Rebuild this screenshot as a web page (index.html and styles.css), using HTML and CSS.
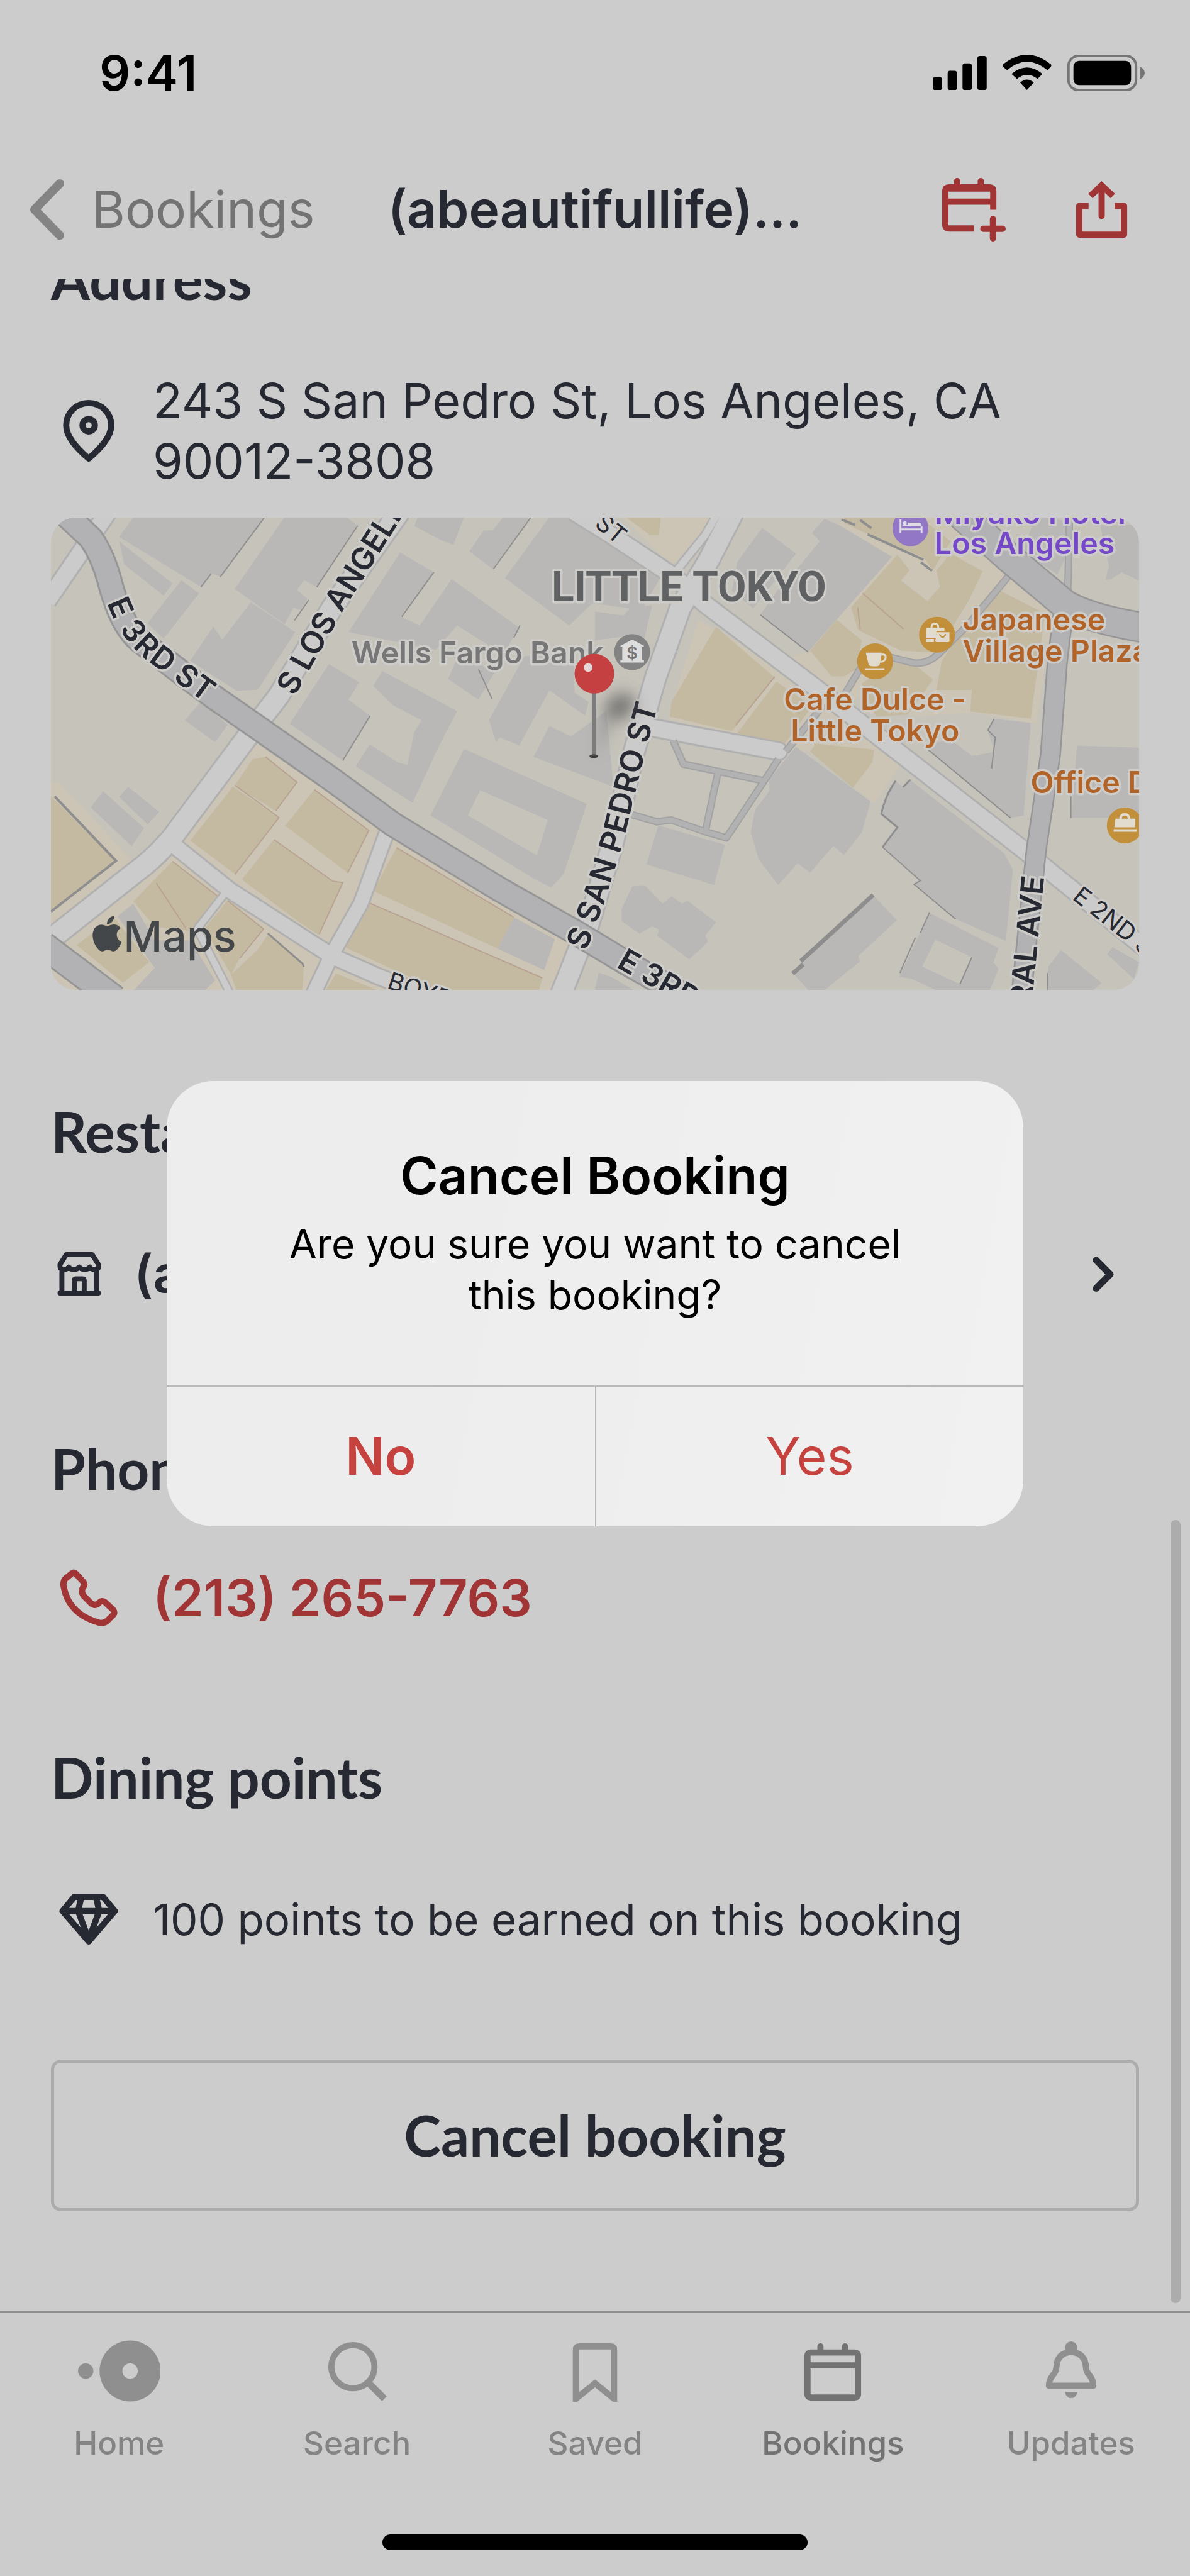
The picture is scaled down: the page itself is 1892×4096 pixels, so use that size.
FILE: index.html
```html
<!DOCTYPE html>
<html lang="en">
    <head>
        <meta charset="utf-8" />
        <meta name="viewport" content="width=device-width, initial-scale=1">
        <title>Booking details</title>
        <link rel="stylesheet" href="styles.css">
    </head>

    <body>
        <header>
            <div class="status">
                <span class="time">9:41</span>
                <svg class="signals" viewBox="1505 86 342 62" aria-hidden="true">
                    <rect x="1505" y="124" width="15" height="21" rx="4"/>
                    <rect x="1529" y="114" width="15" height="31" rx="4"/>
                    <rect x="1553" y="102" width="15" height="43" rx="4"/>
                    <rect x="1577" y="90" width="15" height="55" rx="4"/>
                    <path d="M1618 104 Q1657 72 1696 104 Q1697 106 1695 108 L1690 113 Q1657 86 1625 113 L1619 108 Q1617 106 1618 104Z"/>
                    <path d="M1632 119 Q1657 98 1682 119 L1674 127 Q1657 114 1641 127Z"/>
                    <path d="M1646 133 Q1657 123 1668 133 L1657 145Z"/>
                    <rect x="1724" y="90" width="109" height="55" rx="16" fill="none" stroke="#757575" stroke-width="4"/>
                    <rect x="1732" y="98" width="93" height="39" rx="9"/>
                    <path fill="#757575" d="M1839 107 Q1847 111 1847 117.500 Q1847 124 1839 128Z"/>
                </svg>
            </div>

            <nav class="topbar">
                <a class="back" href="#">
                    <svg viewBox="0 0 56 98" aria-hidden="true"><path d="M49 7 L8 49 L49 91"/></svg>
                    Bookings
                </a>
                <h1>(abeautifullife)...</h1>
                <div class="actions">
                    <button type="button" aria-label="Add to calendar">
                        <svg viewBox="0 0 102 102" aria-hidden="true">
                            <path d="M51 81 H11 Q5 81 5 75 V21 Q5 15 11 15 H76 Q82 15 82 21 V51 M5 38 H82"/>
                            <path d="M8 17 H79" />
                            <path stroke-linecap="round" d="M24 5 V15 M62 5 V15 M81.500 66 V97 M66 81.500 H97"/>
                        </svg>
                    </button>
                    <button type="button" aria-label="Share">
                        <svg viewBox="-10 -5 102 102" aria-hidden="true">
                            <path stroke-linejoin="round" d="M20 40 H5 V86 H77 V40 H62"/>
                            <path stroke-linecap="round" d="M41 8 V56"/>
                            <path d="M23 24 L41 7 L59 24"/>
                        </svg>
                    </button>
                </div>
            </nav>
        </header>

        <main>
            <h2 class="cut">Address</h2>
            <div class="row address">
                <svg class="icon pin" viewBox="0 0 83 101" aria-hidden="true">
                    <path d="M41.500 5 C21 5 5 21 5 41 C5 61 24 80 41.500 95 C59 80 78 61 78 41 C78 21 62 5 41.500 5Z"/>
                    <circle cx="41.500" cy="41" r="10"/>
                </svg>
                <p>243 S San Pedro St, Los Angeles, CA<br>90012-3808</p>
            </div>

            <svg class="map" viewBox="82 835 1756 762" role="img" aria-label="Map of Little Tokyo">
                <defs>
                    <filter id="soft" x="-50%" y="-50%" width="200%" height="200%"><feGaussianBlur stdDeviation="12"/></filter>
                    <path id="third" d="M188 966 Q208 1022 254 1057 Q304 1094 440 1192"/>
                    <path id="third2" d="M1002 1545 L1220 1670"/>
                    <path id="losangeles" d="M460 1116 L538 978 L666 775"/>
                    <path id="sanpedro" d="M930 1529 L960 1447 L989 1355 L1023 1215 L1065 1060"/>
                    <path id="central" d="M1640 1800 L1650 1597 L1668 1413"/>
                    <path id="second" d="M1737 1440 L1900 1568"/>
                    <path id="secondtop" d="M966 838 L1058 913"/>
                    <path id="boyd" d="M627 1582 L790 1635"/>
                </defs>

                <rect class="land" x="82" y="835" width="1756" height="762"/>

                <!-- shopping blocks -->
                <g class="zone">
                    <g transform="translate(60 1040) scale(.574 .37)">
                        <path d="M38 600 L60 600 L265 940 L390 860 L620 410 L1000 820 L1500 1260 L1460 1510 L38 1510Z"/>
                    </g>
                    <g transform="translate(960 820) scale(.574 .333)">
                        <path d="M75 40 H345 L215 280Z"/>
                        <path d="M290 540 L640 880 L840 1200 L860 1240 L785 1430 L600 1180 L500 1150 L205 1020Z"/>
                        <path d="M690 40 H1000 L1290 490 L1240 1045 L1060 990 L900 1010 L640 870 L530 740 L600 690 L835 235 L690 90Z"/>
                    </g>
                </g>

                <!-- buildings -->
                <g class="building">
                    <g transform="translate(60 520) scale(.574 .357)">
                        <path d="M270 880 H640 L515 1150 L490 1135 L460 1195 L230 970Z"/>
                        <path d="M230 990 L380 1180 L355 1235 L245 1095Z"/>
                        <path d="M405 1165 L455 1225 L355 1430 L310 1360Z"/>
                        <path d="M695 880 H870 L900 920 L785 1195 L750 1165 L730 1210 L760 1250 L740 1300 L720 1290 L695 1365 L555 1205Z"/>
                        <path d="M600 1265 L725 1400 L620 1660 L560 1665 L430 1530 L495 1375 L520 1435Z"/>
                        <path d="M1070 880 H1200 L1170 1005 L1135 985 L1060 920Z"/>
                        <path d="M1310 880 H1385 L1280 1115 L1215 1035 L1255 940 L1280 940Z"/>
                        <path d="M1440 880 H1530 L1600 960 L1760 1130 L1700 1300 L1560 1270 L1495 1370 L1315 1155Z"/>
                        <path d="M1020 1040 L1115 1130 L1020 1330 L1075 1370 L1165 1160 L1355 1380 L1310 1500 L1180 1370 L1120 1480 L875 1400Z"/>
                    </g>
                    <g transform="translate(60 1040) scale(.574 .37)">
                        <path d="M460 250 L535 350 L500 425 L415 330Z"/>
                        <path d="M820 85 L905 165 L875 240 L935 310 L858 505 L710 345Z"/>
                        <path d="M970 115 L1180 290 L1130 440 L1100 540 L1055 690 L895 530 L935 435 L1015 515 L1040 525 L1060 380 L1080 330 L1000 265 L945 180Z"/>
                        <path d="M1155 150 L1180 60 L1290 110 L1240 240Z"/>
                        <path d="M1270 330 L1370 50 L1510 40 L1510 210 L1550 250 L1540 310 L1440 200 L1355 440 L1300 405 L1290 425Z"/>
                        <path d="M1440 355 L1500 400 L1600 290 L1620 620 L1395 490Z"/>
                        <path fill-rule="evenodd" d="M1200 455 L1545 695 L1480 1000 L1445 1060 L1400 1025 L1105 745Z M1245 635 L1435 765 L1405 920 L1210 745Z"/>
                        <path d="M185 640 L300 800 L265 880 L150 710Z M255 620 L343 730 L310 785 L230 665Z"/>
                        <path d="M270 1130 L330 1290 L430 1290 L500 1465 L470 1510 H270 L330 1410 L225 1185Z"/>
                        <path d="M1340 1190 L1455 1285 L1425 1420 L1293 1325Z"/>
                    </g>
                    <g transform="translate(960 820) scale(.574 .333)">
                        <path d="M470 95 L565 220 L445 485 L385 400 L400 260Z"/>
                        <path d="M645 50 L690 85 L835 235 L600 695 L465 515 L520 380 L580 270 L632 160 L610 120Z"/>
                        <path d="M100 480 L160 470 L130 700 L90 620 L0 640 V500 L80 520Z"/>
                        <path d="M1240 40 L1325 60 L1325 230 L1300 320 L1200 210Z"/>
                        <path d="M1420 80 H1530 V350 L1480 310 L1450 345 L1435 345 L1445 280Z"/>
                        <path d="M1120 1020 L1225 1040 L1205 1490 L1170 1500 L920 1150 L1000 1120 L1060 1200 L1125 1180 L1105 1085Z"/>
                        <path d="M1355 1150 L1530 1160 V1500 H1340Z"/>
                    </g>
                    <g transform="translate(960 1200) scale(.574 .333)">
                        <path d="M565 15 L775 280 L750 430 L700 540 L670 495 L605 625 L570 580 L515 685 L460 560 L438 430 L450 320 L490 230 L490 170Z"/>
                        <path d="M885 175 L1150 530 L1175 610 L1155 955 L1015 850 L895 680 L915 660 L808 500 L850 405 L805 340 L820 240 L845 180 L865 210Z"/>
                        <path d="M178 395 L365 490 L335 685 L145 585Z"/>
                        <path d="M105 690 L140 685 L190 775 L215 740 L245 775 L260 760 L340 865 L310 930 L318 960 L300 990 L265 1045 L175 930 L180 900 L160 885 L125 920 L75 860 L75 800Z"/>
                        <path d="M780 730 L848 855 L740 1030 L745 1055 L645 1195 H600 L555 1110Z"/>
                        <path fill-rule="evenodd" d="M940 820 L1135 990 L1120 1060 L1135 1090 L1110 1195 H960 L890 1140 L855 1130Z M957 950 L1060 1035 L1025 1165 L920 1080Z"/>
                        <path d="M1310 1000 L1425 1160 L1400 1195 H1270 L1275 1080Z"/>
                        <path d="M1455 985 L1530 1060 L1515 1140 L1440 1020Z"/>
                        <path d="M10 1110 L45 1130 L110 1195 H0Z"/>
                    </g>
                </g>
                <g class="shop">
                    <g transform="translate(60 1040) scale(.574 .37)">
                        <path d="M640 490 L730 600 L670 725 L555 615 L605 500Z"/>
                        <path d="M550 620 L680 755 L555 1000 L430 855Z"/>
                        <path d="M780 630 L932 810 L872 995 L697 790Z"/>
                        <path d="M665 850 L830 1035 L860 1040 L790 1265 L740 1215 L575 1025Z"/>
                        <path d="M1010 885 L1340 1190 L1293 1325 L945 1075Z"/>
                        <path d="M930 1125 L1420 1455 L1410 1510 H1130 L865 1320Z"/>
                        <path d="M38 660 L220 945 L38 1165Z"/>
                        <path d="M380 945 L505 1095 L430 1250 L330 1230 L270 1120Z"/>
                        <path d="M535 1115 L635 1240 L570 1365 L545 1440 L470 1240Z"/>
                        <path d="M650 1260 L750 1390 L745 1510 H560 L545 1440 L620 1330Z"/>
                        <path d="M215 1190 L315 1385 L240 1475 L110 1310Z"/>
                        <path d="M840 1435 L960 1510 H810Z"/>
                    </g>
                    <g transform="translate(960 820) scale(.574 .333)">
                        <path d="M85 40 H185 L180 130 L155 130Z"/>
                        <path d="M700 40 H910 L1000 160 L950 300 L925 240 L760 120 L700 70Z"/>
                        <path d="M340 575 L505 820 L385 1080 L210 1010 L215 940Z"/>
                        <path d="M510 840 L610 960 L530 1150 L400 1090Z"/>
                        <path d="M850 225 L885 300 L860 350 L935 450 L970 380 L960 300 L1000 220 L1090 305 L1050 450 L1010 560 L960 700 L860 690 L740 590 L720 480 L755 410Z"/>
                        <path d="M1140 400 L1265 510 L1225 1020 L1055 985 L1060 880 L960 880 L975 740 L1010 650Z"/>
                        <path d="M680 540 L750 640 L735 780 L700 815 L665 815 L605 690Z"/>
                        <path d="M840 750 L900 760 L950 830 L880 1000 L790 1010 L750 850Z"/>
                        <path d="M620 1140 L785 1170 L780 1230 L725 1355 L605 1180Z"/>
                    </g>
                </g>

                <!-- building shadows -->
                <g class="edge">
                    <path d="M427 834 L355 931 M341 925 L324 947 M577 848 L511 947 M498 968 L475 1001 M857 834 L796 918 M700 923 L648 995"/>
                    <path d="M597 1155 L553 1227 M839 1009 L829 1029 M772 1080 L794 1128"/>
                    <path d="M1227 992 L1304 1052 M1492 1205 L1631 1320 M1424 1367 L1485 1421 L1475 1427 L1542 1483"/>
                    <path stroke-width="3" d="M1445 1260 Q1428 1285 1422 1313 L1448 1335 L1424 1367 M1469 1258 L1457 1270"/>
                    <path d="M1500 1472 L1485 1505 M1477 1513 L1452 1570 M1568 1545 L1549 1588"/>
                    <path d="M1728 1320 V1285 M1690 1570 V1597 M1604 1160 L1594 1178 L1606 1190 L1600 1240"/>
                    <path stroke-width="4" d="M88 1285 L187 1389 L82 1471 M1358 838 L1380 847 M1388 839 L1406 852 M1400 862 L1490 903 M1486 907 L1504 921"/>
                    <path stroke-width="7" d="M1409 1444 L1292 1551 M1296 1556 L1279 1571"/>
                    <path stroke-width="3" d="M432 1506 L488 1555 L490 1560"/>
                </g>
                <g class="edge shopedge">
                    <path d="M428 1221 L479 1262 L445 1308 M379 1267 L450 1319 L379 1411 M507 1274 L595 1340 L561 1408 M442 1355 L537 1422 L553 1424 L515 1507"/>
                    <path d="M640 1368 L829 1480 M594 1456 L875 1578 M278 1390 L350 1445 M252 1425 L300 1498 M367 1453 L425 1499 L387 1546"/>
                    <path d="M1392 957 L1458 1015 M1250 1092 L1187 1170 M1384 980 L1388 1015"/>
                </g>

                <!-- roads, outline first -->
                <g class="road outline">
                    <path stroke-width="32" d="M175 825 L76 970"/>
                    <path stroke-width="38" d="M645 825 L536 980 L450 1122 L404 1182 L278 1351 Q250 1385 215 1410 L76 1520"/>
                    <path stroke-width="30" d="M278 1362 L370 1436 L536 1543 L611 1576 L690 1606"/>
                    <path stroke-width="28" d="M627 1335 L582 1458 L536 1539 L505 1605"/>
                    <path stroke-width="15" d="M367 1436 L318 1499 L372 1605"/>
                    <path stroke-width="38" d="M1184 825 L1144 903 L1098 980 L1058 1093 L1023 1213 L989 1360 L950 1490 L921 1565 L905 1605"/>
                    <path stroke-width="16" d="M1160 825 L1138 863 L1092 920"/>
                    <path stroke-width="32" d="M925 825 L986 863 L1086 929 L1138 975 L1327 1118 L1454 1217 L1660 1378 L1700 1411 L1860 1540"/>
                    <path stroke-width="32" stroke-linecap="round" d="M1046 1173 L1256 1212"/>
                </g>
                <g class="road minor">
                    <path stroke-width="26" d="M175 825 L76 970"/>
                    <path stroke-width="32" d="M645 825 L536 980 L450 1122 L404 1182 L278 1351 Q250 1385 215 1410 L76 1520"/>
                    <path stroke-width="24" d="M278 1362 L370 1436 L536 1543 L611 1576 L690 1606"/>
                    <path stroke-width="22" d="M627 1335 L582 1458 L536 1539 L505 1605"/>
                    <path stroke-width="10" d="M367 1436 L318 1499 L372 1605"/>
                    <path stroke-width="32" d="M1184 825 L1144 903 L1098 980 L1058 1093 L1023 1213 L989 1360 L950 1490 L921 1565 L905 1605"/>
                    <path stroke-width="11" d="M1160 825 L1138 863 L1092 920"/>
                    <path stroke-width="26" d="M925 825 L986 863 L1086 929 L1138 975 L1327 1118 L1454 1217 L1660 1378 L1700 1411 L1860 1540"/>
                    <path stroke-width="26" stroke-linecap="round" d="M1046 1173 L1256 1212"/>
                </g>
                <g class="road pathedge">
                    <path stroke-width="12" d="M1086 1195 L1103 1233 L1233 1260 M1256 1225 L1172 1352 L1138 1342 L1083 1323 L1060 1326 L1014 1313 M1158 1248 L1138 1342"/>
                    <path stroke-width="12" d="M1631 925 L1563 1007 L1518 1052 Q1496 1074 1471 1069 L1435 1060 M1390 1075 L1362 1122 M1327 1140 L1268 1212 M1726 825 L1723 953"/>
                </g>
                <g class="road path">
                    <path stroke-width="8" d="M1086 1195 L1103 1233 L1233 1260 M1256 1225 L1172 1352 L1138 1342 L1083 1323 L1060 1326 L1014 1313 M1158 1248 L1138 1342"/>
                    <path stroke-width="8" d="M1631 925 L1563 1007 L1518 1052 Q1496 1074 1471 1069 L1435 1060 M1390 1075 L1362 1122 M1327 1140 L1268 1212 M1726 825 L1723 953"/>
                </g>
                <g class="road majoredge">
                    <path stroke-width="42" d="M95 820 L146 868 Q165 895 176 935 Q195 1010 226 1034 L301 1092 L347 1126 L416 1174 L536 1258 L634 1330 L806 1435 L933 1507 L1006 1551 L1110 1610"/>
                    <path stroke-width="46" d="M70 1525 L185 1612"/>
                    <path stroke-width="50" d="M1545 825 L1626 898 L1718 975 Q1760 1000 1860 1015"/>
                    <path stroke-width="34" d="M1718 970 L1706 1070 L1695 1217 L1672 1373 L1648 1605"/>
                </g>
                <g class="road major">
                    <path stroke-width="36" d="M95 820 L146 868 Q165 895 176 935 Q195 1010 226 1034 L301 1092 L347 1126 L416 1174 L536 1258 L634 1330 L806 1435 L933 1507 L1006 1551 L1110 1610"/>
                    <path stroke-width="40" d="M70 1525 L185 1612"/>
                    <path stroke-width="45" d="M1545 825 L1626 898 L1718 975 Q1760 1000 1860 1015"/>
                    <path stroke-width="29" d="M1718 970 L1706 1070 L1695 1217 L1672 1373 L1648 1605"/>
                </g>

                <!-- street names -->
                <g class="street">
                    <text dy="17"><textPath href="#third">E 3RD ST</textPath></text>
                    <text dy="17"><textPath href="#third2">E 3RD ST</textPath></text>
                    <text dy="17"><textPath href="#losangeles">S LOS ANGELES ST</textPath></text>
                    <text dy="17"><textPath href="#sanpedro">S SAN PEDRO ST</textPath></text>
                    <text dy="17" text-anchor="end"><textPath href="#central" startOffset="100%">CENTRAL AVE</textPath></text>
                </g>
                <g class="street side">
                    <text dy="13"><textPath href="#second">E 2ND ST</textPath></text>
                    <text dy="13"><textPath href="#secondtop">ST</textPath></text>
                    <text dy="13"><textPath href="#boyd">BOYD ST</textPath></text>
                </g>

                <!-- places -->
                <text class="district" x="890" y="970">LITTLE TOKYO</text>
                <g class="place">
                    <text class="bank" x="567" y="1071">Wells Fargo Bank</text>
                    <text class="hotel" x="1508" y="845">Miyako Hotel</text>
                    <text class="hotel" x="1508" y="894">Los Angeles</text>
                    <text x="1553" y="1017">Japanese</text>
                    <text x="1553" y="1067">Village Plaza</text>
                    <text x="1412" y="1146" text-anchor="middle">Cafe Dulce -</text>
                    <text x="1412" y="1196" text-anchor="middle">Little Tokyo</text>
                    <text x="1663" y="1280">Office Depot</text>
                </g>

                <g transform="translate(1020 1052)">
                    <circle r="29" fill="#838383"/>
                    <path fill="#ddd" d="M-19 -10 L0 -20 L19 -10 V-8 H16 V13 H19 V17 H-19 V13 H-16 V-8 H-19Z"/>
                    <text class="dollar" y="11">$</text>
                </g>
                <g transform="translate(1469 852)">
                    <circle r="29" fill="#9277c6"/>
                    <path fill="none" stroke="#e0dce8" stroke-width="3" d="M-16 -14 V8 M-16 2 H18 V8 M18 2 V-3"/>
                    <path fill="#e0dce8" d="M-13 -3 H18 V-5 Q17 -9 12 -9 H-4 V-5 H-13Z"/>
                    <circle cx="-9" cy="-8" r="3" fill="#e0dce8"/>
                </g>
                <g transform="translate(1512 1024)">
                    <circle r="29" fill="#c28f3a"/>
                    <path fill="none" stroke="#e2dccf" stroke-width="3" d="M-9 -11 Q-9 -18 -4 -18 Q2 -18 2 -11"/>
                    <path fill="#e2dccf" d="M-17 -11 H12 V-6 H-1 V5 H-18Z M-18 7 H-5 V12 H-18Z M0 -4 H20 V10 Q20 12 18 12 H0 Q-3 12 -3 10Z"/>
                    <path fill="none" stroke="#c28f3a" stroke-width="2" d="M4 -1 Q9 9 14 -1"/>
                </g>
                <g transform="translate(1412 1067)">
                    <circle r="29" fill="#c28f3a"/>
                    <path fill="#e2dccf" d="M-15 -14 H11 L8 3 Q7 8 3 8 H-5 Q-10 8 -11 3Z M-16 11 H15 V14 H-16Z"/>
                    <path fill="none" stroke="#e2dccf" stroke-width="3" d="M10 -11 H14 Q18 -10 17 -5 Q15 1 8 1"/>
                </g>
                <g transform="translate(1815 1332)">
                    <circle r="29" fill="#c28f3a"/>
                    <path fill="none" stroke="#e2dccf" stroke-width="4" d="M-7 -10 Q-7 -18 0 -18 Q7 -18 7 -10"/>
                    <path fill="#e2dccf" d="M-15 -11 H17 V3 H-17Z M-18 6 H19 V10 H-18Z"/>
                </g>

                <!-- dropped pin -->
                <ellipse cx="1000" cy="1140" rx="26" ry="20" transform="rotate(-35 1000 1140)" fill="#555" opacity=".65" filter="url(#soft)"/>
                <path d="M962 1220 L975 1160 L995 1150Z" fill="#666" opacity=".5" filter="url(#soft)"/>
                <rect x="955" y="1112" width="7" height="110" rx="3" fill="#7c7c7c"/>
                <ellipse cx="958" cy="1220" rx="7" ry="3" fill="#444"/>
                <circle cx="959" cy="1087" r="32" fill="#c54141"/>
                <circle cx="949" cy="1077" r="7" fill="#e3d6d6"/>

                <g class="maps">
                    <path transform="translate(144 1478) scale(2.380)" d="M12.152 6.896c-.948 0-2.415-1.078-3.960-1.040-2.040.027-3.910 1.183-4.961 3.014-2.117 3.675-.546 9.103 1.519 12.090 1.013 1.454 2.208 3.090 3.792 3.039 1.520-.065 2.090-.987 3.935-.987 1.831 0 2.350.987 3.960.948 1.637-.026 2.676-1.480 3.676-2.948 1.156-1.688 1.636-3.325 1.662-3.415-.039-.013-3.182-1.221-3.220-4.857-.026-3.040 2.480-4.494 2.597-4.559-1.429-2.090-3.623-2.324-4.390-2.376-2-.156-3.675 1.090-4.610 1.090zM15.530 3.830c.843-1.012 1.400-2.427 1.245-3.830-1.207.052-2.662.805-3.532 1.818-.780.896-1.454 2.338-1.273 3.714 1.338.104 2.715-.688 3.559-1.701"/>
                    <text x="199" y="1535">Maps</text>
                </g>
            </svg>

            <h2 class="restaurant">Restaurant</h2>
            <a class="row place-link" href="#">
                <svg class="icon store" viewBox="0 0 70 70" aria-hidden="true">
                    <path d="M14 4 H56 L66 20 V23 Q66 28 60 28 Q54 28 52 24 Q49 28 44 28 Q38 28 35 24 Q32 28 26 28 Q21 28 18 24 Q16 28 10 28 Q4 28 4 23 V20Z M7 27 V66 M63 27 V66"/>
                    <path stroke-linecap="round" d="M4 66 H66"/>
                    <path d="M27 66 V46 Q27 43 30 43 H40 Q43 43 43 46 V66"/>
                </svg>
                <span>(abeautifullife)</span>
                <svg class="chevron" viewBox="0 0 36 58" aria-hidden="true"><path d="M6 6 L29 29 L6 52"/></svg>
            </a>

            <h2 class="phone">Phone number</h2>
            <a class="row tel" href="tel:+12132657763">
                <svg class="icon handset" viewBox="0 0 92 92" aria-hidden="true">
                    <path d="M19 7 Q22 4 25 7 L37 20 Q41 25 37 29 Q33 36 38 43 L50 55 Q56 60 62 55 Q67 49 72 53 L85 65 Q89 70 85 74 L76 83 Q70 88 62 86 Q14 72 6 29 Q4 20 9 15Z"/>
                </svg>
                <span>(213) 265-7763</span>
            </a>

            <h2 class="points">Dining points</h2>
            <div class="row earned">
                <svg class="icon diamond" viewBox="0 0 94 82" aria-hidden="true">
                    <path d="M24 5 H70 L89 28 L47 77 L5 28Z M7 28 H87 M35 6 L30 28 L47 74 L64 28 L59 6"/>
                </svg>
                <p>100 points to be earned on this booking</p>
            </div>

            <button class="cancel" type="button">Cancel booking</button>
            <div class="scrollbar"></div>
        </main>

        <footer>
            <nav class="tabs">
                <a href="#">
                    <svg viewBox="0 0 134 100" aria-hidden="true">
                        <path fill="currentColor" stroke="none" fill-rule="evenodd" d="M0 50 a12.500 12.500 0 1 0 25 0 a12.500 12.500 0 1 0 -25 0Z M35 50 a49.500 49.500 0 1 0 99 0 a49.500 49.500 0 1 0 -99 0Z M72 50 a12.500 12.500 0 1 0 25 0 a12.500 12.500 0 1 0 -25 0Z"/>
                    </svg>
                    Home
                </a>
                <a href="#">
                    <svg viewBox="0 0 100 100" aria-hidden="true">
                        <circle cx="43" cy="43" r="35"/>
                        <path stroke-width="11" d="M66 67 L94 95"/>
                    </svg>
                    Search
                </a>
                <a href="#">
                    <svg viewBox="0 0 100 100" aria-hidden="true">
                        <path d="M19 95 V15 Q19 10 24 10 H76 Q81 10 81 15 V95 L50 70Z"/>
                    </svg>
                    Saved
                </a>
                <a class="active" href="#">
                    <svg viewBox="0 0 100 100" aria-hidden="true">
                        <rect x="9" y="20" width="82" height="73" rx="5"/>
                        <path d="M9 41 H91"/>
                        <path stroke-linecap="round" d="M30 10 V18 M70 10 V18"/>
                    </svg>
                    Bookings
                </a>
                <a href="#">
                    <svg viewBox="0 0 100 100" aria-hidden="true">
                        <circle cx="50" cy="12" r="10" fill="currentColor" stroke="none"/>
                        <path stroke-linejoin="round" d="M50 19 Q27 21 26 44 Q26 50 21 56 Q14 64 14 74 H86 Q86 64 79 56 Q74 50 74 44 Q73 21 50 19Z"/>
                        <path fill="currentColor" stroke="none" d="M40 84 H60 Q58 94 50 94 Q42 94 40 84Z"/>
                    </svg>
                    Updates
                </a>
            </nav>
            <div class="homebar"></div>
        </footer>

        <div class="overlay">
            <div class="alert" role="alertdialog" aria-labelledby="alertTitle" aria-describedby="alertText">
                <h3 id="alertTitle">Cancel Booking</h3>
                <p id="alertText">Are you sure you want to cancel<br>this booking?</p>
                <div class="choices">
                    <button class="no" type="button">No</button>
                    <button class="yes" type="button">Yes</button>
                </div>
            </div>
        </div>
    </body>
</html>
```
FILE: styles.css
```css
* {
    box-sizing: border-box;
}
body {
    margin: 0;
    position: relative;
    background-color: #ccc;
    color: #262932;
    font-family: Inter, "Liberation Sans", sans-serif;
    font-size: 82px;
    line-height: 96px;
}
h1, h2, h3, p {
    margin: 0;
}
a {
    color: inherit;
    text-decoration: none;
}
button {
    padding: 0;
    border: none;
    background: none;
    color: inherit;
    font: inherit;
    cursor: pointer;
}
svg {
    display: block;
    flex: none;
}

/* header */
.status {
    display: flex;
    justify-content: space-between;
    align-items: center;
    height: 222px;
    padding: 10px 72px 0 158px;
}
.time {
    color: #000;
    font-size: 77px;
    font-weight: 600;
}
.signals {
    width: 337px;
}
.topbar {
    display: grid;
    grid-template-columns: 1fr auto 1fr;
    align-items: center;
    height: 222px;
    padding: 0 47px;
}
.back {
    display: flex;
    align-items: center;
    gap: 44px;
    color: #737373;
    font-size: 81px;
}
.back svg {
    width: 55px;
    fill: none;
    stroke: #848484;
    stroke-width: 14;
    stroke-linecap: round;
    stroke-linejoin: round;
}
h1 {
    font-size: 82px;
    font-weight: 600;
}
.actions {
    display: flex;
    justify-content: flex-end;
    gap: 102px;
    padding-right: 43px;
    color: #a13535;
}
.actions svg {
    width: 101px;
    fill: none;
    stroke: currentColor;
    stroke-width: 10;
}

/* booking details */
main {
    position: relative;
    overflow: hidden;
    padding: 0 81px 159px;
}
h2 {
    font-family: Lato, sans-serif;
    font-size: 89px;
    font-weight: 700;
    line-height: 104px;
}
.cut {
    margin-top: -53px;
}
.restaurant {
    margin-top: 173px;
}
.phone {
    margin-top: 209px;
}
.points {
    margin-top: 185px;
}
.row {
    display: flex;
    align-items: center;
    gap: 42px;
}
.icon {
    width: 120px;
    fill: none;
    stroke: currentColor;
    stroke-width: 10;
    stroke-linejoin: round;
}
.address {
    margin: 94px 0 42px;
    font-size: 77px;
}
.pin {
    height: 99px;
}
.map {
    width: 100%;
    border-radius: 40px;
}
.place-link {
    margin-top: 127px;
    font-weight: 600;
}
.store {
    width: 90px;
    height: 69px;
    stroke-width: 8;
}
.chevron {
    width: 35px;
    margin: 0 39px 0 auto;
    fill: none;
    stroke: currentColor;
    stroke-width: 11;
    stroke-linecap: round;
    stroke-linejoin: round;
}
.tel {
    margin-top: 106px;
    color: #a13535;
    font-size: 81px;
    font-weight: 600;
}
.handset {
    height: 91px;
}
.earned {
    min-height: 96px;
    margin-top: 126px;
    font-size: 69px;
}
.diamond {
    height: 81px;
}
.cancel {
    display: block;
    width: 100%;
    height: 241px;
    margin-top: 175px;
    border: 5px solid #acacac;
    border-radius: 16px;
    font-family: Lato, sans-serif;
    font-size: 89px;
    font-weight: 700;
}
.scrollbar {
    position: absolute;
    right: 15px;
    bottom: 13px;
    width: 16px;
    height: 1245px;
    border-radius: 8px;
    background-color: #acacac;
}

/* map */
.land { fill: #c6c3bb; }
.zone { fill: #ccc4b4; }
.building { fill: #b9b8b6; }
.shop { fill: #c4baa2; }
.edge {
    fill: none;
    stroke: #8e8e8e;
    stroke-width: 2;
}
.shopedge {
    stroke: #b8a392;
}
.road {
    fill: none;
    stroke-linejoin: round;
}
.outline { stroke: #b0b0b0; }
.minor { stroke: #cbcbcb; }
.pathedge { stroke: #a2a2a3; }
.path { stroke: #b2b2b3; }
.majoredge { stroke: #969697; }
.major { stroke: #b2b2b4; }
.map text {
    stroke: #cdccc9;
    stroke-width: 7;
    stroke-linejoin: round;
    paint-order: stroke;
}
.street {
    fill: #262932;
    font-size: 50px;
    font-weight: 600;
}
.side {
    font-size: 39px;
    font-weight: 400;
}
.district {
    fill: #5f6163;
    font-family: Roboto, sans-serif;
    font-size: 67px;
    font-weight: 700;
}
.place {
    fill: #b26328;
    font-size: 49px;
    font-weight: 600;
}
.bank { fill: #777; }
.hotel { fill: #7448c8; }
.map .dollar {
    fill: #777;
    stroke: none;
    font-size: 27px;
    font-weight: 600;
    text-anchor: middle;
}
.maps {
    fill: #444749;
}
.map .maps text {
    stroke: none;
    font-size: 69px;
    font-weight: 500;
}

/* tab bar */
footer {
    padding-bottom: 40px;
    border-top: 3px solid #8f8f8f;
}
.tabs {
    display: grid;
    grid-template-columns: repeat(5, 1fr);
    padding-top: 43px;
}
.tabs a {
    display: flex;
    flex-direction: column;
    align-items: center;
    gap: 36px;
    color: #848484;
    font-size: 51px;
    font-weight: 500;
    line-height: 60px;
}
.tabs svg {
    height: 98px;
    fill: none;
    stroke: currentColor;
    stroke-width: 10;
    color: #8f8f8f;
}
.tabs .active,
.tabs .active svg {
    color: #737373;
}
.homebar {
    width: 676px;
    height: 25px;
    margin: 115px auto 0;
    border-radius: 13px;
    background-color: #000;
}

/* alert */
.overlay {
    position: absolute;
    inset: 0;
    display: grid;
    place-items: center;
    padding-top: 52px;
}
.alert {
    width: 72%;
    padding-top: 103px;
    border-radius: 74px;
    background: linear-gradient(100deg, #ededed 30%, #f1f1f1);
    color: #000;
    text-align: center;
    overflow: hidden;
}
h3 {
    font-size: 82px;
    font-weight: 600;
}
.alert p {
    margin: 19px 0 104px;
    font-size: 64px;
    line-height: 81px;
}
.choices {
    display: grid;
    grid-template-columns: 1fr 1fr;
    border-top: 2px solid #b9b9b9;
    color: #c5423f;
}
.choices button {
    height: 222px;
}
.choices .no {
    font-weight: 600;
}
.choices .yes {
    border-left: 2px solid #b9b9b9;
}
```
